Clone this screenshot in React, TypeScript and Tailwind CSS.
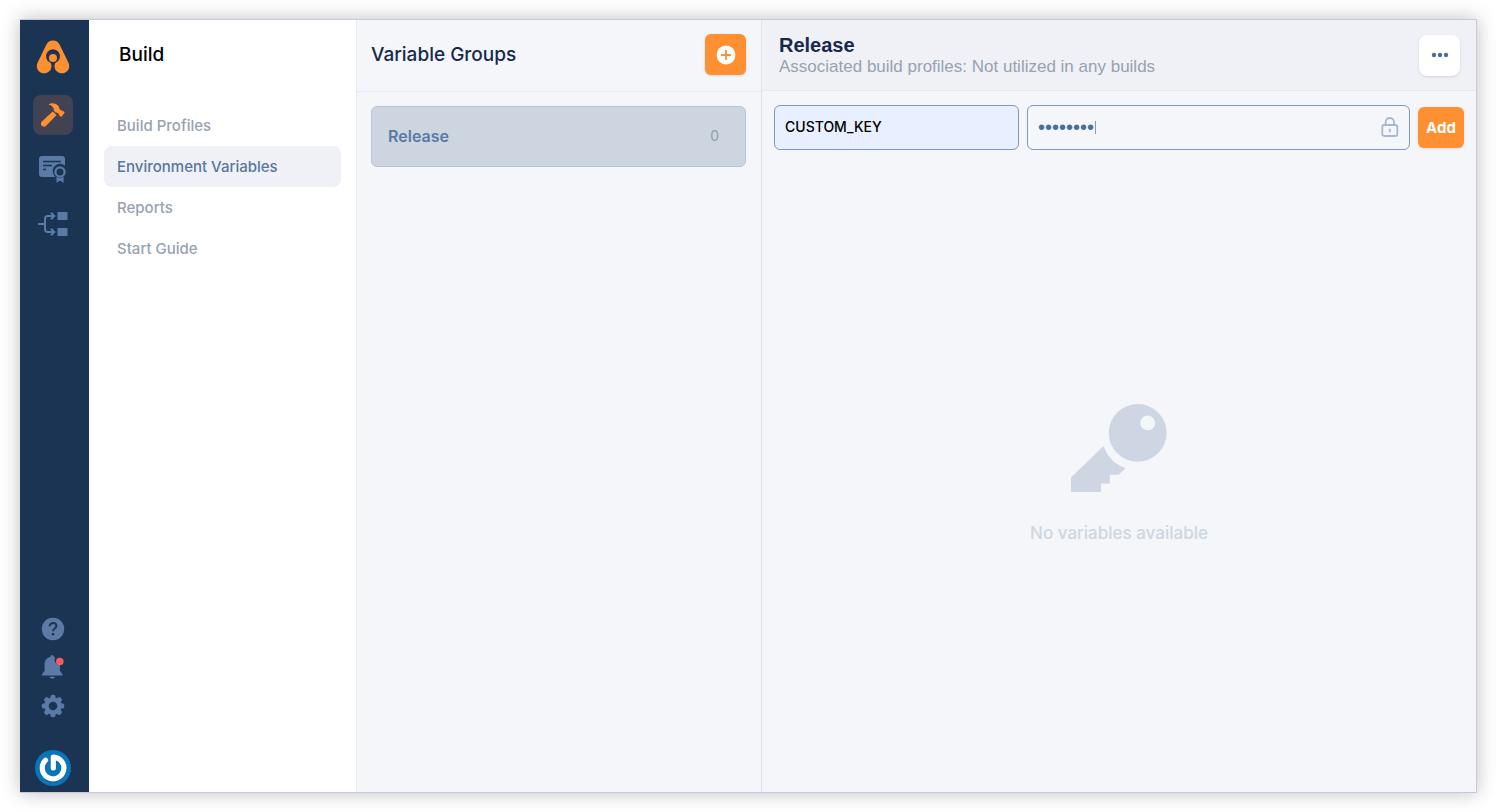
import { useState } from "react";
import { clsx } from "clsx";

function LogoIcon() {
  return (
    <svg viewBox="0 0 34 34" className="h-[34px] w-[34px]" aria-hidden="true">
      <path
        fill="#ff9031"
        d="M17 .5c3 0 5.300 1.400 6.800 4.400l8.400 17.300c.7 1.400 1 2.500 1 3.800 0 4.200-3.200 7.300-7.200 7.300-4.200 0-7.500-3-7.500-7.300 0-1.200.3-2.200 1-3.200a7 7 0 1 0-5 0c.7 1 1 2 1 3.200 0 4.300-3.300 7.300-7.500 7.300-4 0-7.200-3.100-7.200-7.300 0-1.300.3-2.400 1-3.800L10.200 4.900C11.700 1.900 14 .5 17 .5z"
      />
      <circle cx="17" cy="18" r="4" fill="#ff9031" />
    </svg>
  );
}

function HammerIcon() {
  return (
    <svg viewBox="0 0 24 24" className="h-6 w-6" fill="#ff9031" aria-hidden="true">
      <path d="M7.500 1.400C10-.3 14.200-.2 17 2.500c1.600 1.500.9 3.200 2 4.200 1 .8 1.800.4 2.600 1l2.200 1.700-3.500 4.600-1.900-1.400c-.8-.8-.3-1.700-1.200-2.300-.9-.7-1.900-.3-2.900-1.100-1.700-1.200-1.500-2.700-1.900-4.100-.5-1.800-2.500-3-4.900-3.700z" />
      <path d="M11.700 8.400l3.900 3.500L5.100 22.700a2.900 2.900 0 0 1-4.200-4.200z" />
    </svg>
  );
}

function CertificateIcon() {
  return (
    <svg viewBox="0 0 28 28" className="h-7 w-7" aria-hidden="true">
      <path
        fill="#5b7ba6"
        d="M3 1h20a3 3 0 0 1 3 3v6.700a7.300 7.300 0 0 0-11.700 8 7 7 0 0 0 2 3.300H3a3 3 0 0 1-3-3V4a3 3 0 0 1 3-3z"
      />
      <path d="M4 6.500h18M4 10.500h9M4 14.500h3" stroke="#1b3453" strokeWidth="1.600" />
      <circle cx="21" cy="17" r="4.600" fill="none" stroke="#5b7ba6" strokeWidth="2.200" />
      <path fill="#5b7ba6" d="M17.500 21.800a6 6 0 0 0 7.100 0V28L21 25.500 17.500 28z" />
    </svg>
  );
}

function FlowIcon() {
  return (
    <svg viewBox="0 0 30 26" className="h-[26px] w-[30px]" aria-hidden="true">
      <path
        fill="none"
        stroke="#5b7ba6"
        strokeWidth="2"
        d="M0 13h7M16 5h-6a3 3 0 0 0-3 3v10a3 3 0 0 0 3 3h6M13 1.800 16.200 5 13 8.200M13 17.800l3.200 3.200-3.200 3.200"
      />
      <path fill="#5b7ba6" d="M19.500 1h10v8h-10zM19.500 17h10v8h-10z" />
    </svg>
  );
}

function HelpIcon() {
  return (
    <svg viewBox="0 0 24 24" className="h-6 w-6" aria-hidden="true">
      <circle cx="12" cy="12" r="11.200" fill="#5b7ba6" />
      <path
        d="M8.700 9.300c0-1.900 1.400-3.200 3.300-3.200s3.400 1.200 3.400 3c0 2.500-3.400 2.400-3.400 5.200"
        fill="none"
        stroke="#1b3453"
        strokeWidth="2"
      />
      <circle cx="12" cy="17.300" r="1.300" fill="#1b3453" />
    </svg>
  );
}

function BellIcon() {
  return (
    <svg viewBox="0 0 24 26" className="h-[26px] w-6" aria-hidden="true">
      <path
        fill="#5b7ba6"
        d="M11.200 1c1 0 1.600.7 1.700 1.800l1.200.5a5.600 5.600 0 0 0 4.800 8v5.500l2.600 3.400v1.300H1v-1.300l2.600-3.400v-6.500c0-3.800 2.300-6.500 5.900-7.500C9.600 1.700 10.200 1 11.200 1zM8.500 22.800h5.500a2.800 2.300 0 0 1-5.500 0z"
      />
      <circle cx="18.800" cy="7.500" r="3.800" fill="#ff5a5f" />
    </svg>
  );
}

function GearIcon() {
  return (
    <svg viewBox="0 0 24 24" className="h-6 w-6" aria-hidden="true">
      <g fill="#5b7ba6">
        {[0, 45, 90, 135].map((angle) => (
          <rect key={angle} x="9.600" y=".8" width="4.800" height="22.400" rx="1.600" transform={`rotate(${angle} 12 12)`} />
        ))}
        <circle cx="12" cy="12" r="8.700" />
      </g>
      <circle cx="12" cy="12" r="4.300" fill="#1b3453" />
    </svg>
  );
}

function AvatarIcon() {
  return (
    <svg viewBox="0 0 36 36" className="h-9 w-9" aria-hidden="true">
      <circle cx="18" cy="18" r="18" fill="#0a75b8" />
      <path
        d="M10.600 10.200a10.800 10.800 0 1 0 7.700-3V18"
        fill="none"
        stroke="#075a92"
        strokeWidth="5.600"
        strokeLinecap="round"
        opacity=".6"
        transform="translate(0 1)"
      />
      <path
        d="M10.600 10.200a10.800 10.800 0 1 0 7.700-3V18"
        fill="none"
        stroke="#fff"
        strokeWidth="5.200"
        strokeLinecap="round"
        strokeLinejoin="round"
      />
    </svg>
  );
}

function AddCircleIcon() {
  return (
    <svg viewBox="0 0 20 20" className="h-5 w-5" aria-hidden="true">
      <circle cx="10" cy="10" r="9.400" fill="#fff" />
      <path d="M10 5v10M5 10h10" stroke="#ff9031" strokeWidth="1.800" />
    </svg>
  );
}

function LockIcon() {
  return (
    <svg viewBox="0 0 18 20" className="h-5 w-[18px]" fill="none" stroke="#a9b8ce" strokeWidth="1.800" aria-hidden="true">
      <rect x="1.300" y="8" width="15" height="11" rx="1.800" />
      <path d="M4.600 8V5.200a4.200 4.200 0 0 1 8.400 0V8M8.800 11.700v3.500" />
    </svg>
  );
}

function KeyIcon() {
  return (
    <svg viewBox="0 0 96 90" className="h-[90px] w-24" fill="#cdd6e2" aria-hidden="true">
      <path
        fillRule="evenodd"
        d="M66.700 1a28.900 28.900 0 1 1 0 57.800 28.900 28.900 0 0 1 0-57.800zM76.700 12.500a7.400 7.400 0 1 0 0 14.800 7.400 7.400 0 0 0 0-14.800z"
      />
      <path d="M0 74.500 32.600 43c3.200 10.300 11 18.200 22 22.200l-7 6.500h-8.800v8.800H30V89H0z" />
    </svg>
  );
}

const navItems = ["Build Profiles", "Environment Variables", "Reports", "Start Guide"];

const railLink = "flex items-center justify-center";

export default function App() {
  const [key, setKey] = useState("CUSTOM_KEY");
  const [value, setValue] = useState("password");

  return (
    <div className="flex min-h-screen bg-white py-[19px] pr-[19px] pl-5 font-['Liberation_Sans',Arial,sans-serif]">
      <div className="flex flex-1 border border-l-0 border-[#c5cbdc] bg-[#f4f6fa] shadow-[0_0_18px_rgba(0,0,0,0.26)]">
        <aside className="flex w-[69px] shrink-0 flex-col items-center bg-[#1b3453] pt-5 pr-[3px] pb-[6px]">
          <a href="#home" aria-label="Home" className={railLink}>
            <LogoIcon />
          </a>
          <nav aria-label="Modules" className="mt-[21px] flex flex-col items-center">
            <a href="#build" aria-label="Build" className={clsx(railLink, "h-10 w-10 rounded-lg bg-[#414352]")}>
              <HammerIcon />
            </a>
            <a href="#signing" aria-label="Signing identities" className={clsx(railLink, "mt-5")}>
              <CertificateIcon />
            </a>
            <a href="#distribute" aria-label="Distribute" className={clsx(railLink, "mt-7")}>
              <FlowIcon />
            </a>
          </nav>
          <div className="mt-auto flex flex-col items-center">
            <a href="#help" aria-label="Help" className={railLink}>
              <HelpIcon />
            </a>
            <a href="#notifications" aria-label="Notifications" className={clsx(railLink, "mt-[13px]")}>
              <BellIcon />
            </a>
            <a href="#settings" aria-label="Settings" className={clsx(railLink, "mt-[14px]")}>
              <GearIcon />
            </a>
            <a href="#account" aria-label="Account" className={clsx(railLink, "mt-8")}>
              <AvatarIcon />
            </a>
          </div>
        </aside>

        <section className="w-[268px] shrink-0 border-r border-[#e6e9ef] bg-white">
          <h1 className="px-[30px] pt-[23px] font-['Inter',sans-serif] text-[19px] leading-6 font-medium text-black">
            Build
          </h1>
          <nav aria-label="Build" className="mt-[38px] flex flex-col px-[15px]">
            {navItems.map((item) => {
              const active = item === "Environment Variables";
              return (
                <a
                  key={item}
                  href={"#" + item.toLowerCase().replace(" ", "-")}
                  aria-current={active ? "page" : undefined}
                  className={clsx(
                    "flex h-[41px] items-center rounded-lg px-[13px] pt-0.5 font-['Inter',sans-serif] text-[15px] font-medium",
                    active ? "bg-[#eff1f6] text-[#57779f]" : "text-[#98a2af]",
                  )}
                >
                  {item}
                </a>
              );
            })}
          </nav>
        </section>

        <section className="w-[405px] shrink-0 border-r border-[#dce1e9]">
          <header className="flex h-[72px] items-center justify-between border-b border-[#e6e9ef] pr-[15px] pb-0.5 pl-[14px]">
            <h2 className="font-['Inter',sans-serif] text-[19px] leading-6 font-medium text-[#17294d]">
              Variable Groups
            </h2>
            <button
              type="button"
              aria-label="Add variable group"
              className="flex h-[41px] w-[41px] items-center justify-center rounded-md bg-[#ff9031] shadow-sm"
            >
              <AddCircleIcon />
            </button>
          </header>
          <div className="pt-[14px] pr-[15px] pl-[14px]">
            <button
              type="button"
              className="flex h-[61px] w-full items-center justify-between rounded-md border border-[#b8c5d8] bg-[#cdd5e1] pr-[26px] pb-0.5 pl-4 font-['Inter',sans-serif]"
            >
              <span className="text-base font-semibold text-[#5a7aa6]">Release</span>
              <span className="text-sm text-[#939cab]">0</span>
            </button>
          </div>
        </section>

        <main className="flex min-w-0 flex-1 flex-col">
          <header className="flex h-[71px] shrink-0 items-center justify-between border-b border-[#e6e9ef] bg-[#eff1f6] pr-4 pl-[17px]">
            <div className="pt-0.5">
              <h2 className="text-xl leading-[22px] font-bold text-[#17294d]">Release</h2>
              <p className="text-[17px] leading-[22px] text-[#98a2af]">
                Associated build profiles: Not utilized in any builds
              </p>
            </div>
            <button
              type="button"
              aria-label="More options"
              className="flex h-[41px] w-[41px] items-center justify-center rounded-lg bg-white shadow-sm"
            >
              <svg viewBox="0 0 18 6" className="h-1.5 w-[18px]" fill="#4a6da0" aria-hidden="true">
                <circle cx="3" cy="3" r="2.200" />
                <circle cx="9" cy="3" r="2.200" />
                <circle cx="15" cy="3" r="2.200" />
              </svg>
            </button>
          </header>

          <form className="flex items-center gap-2 py-[14px] pr-3 pl-3" onSubmit={(event) => event.preventDefault()}>
            <input
              type="text"
              aria-label="Variable key"
              value={key}
              onChange={(event) => setKey(event.target.value)}
              className="h-[45px] w-[245px] rounded-md border border-[#7d98bd] bg-[#e8effe] px-[10px] pb-0.5 font-['Inter',sans-serif] text-sm font-medium text-black outline-none"
            />
            <div className="relative flex h-[45px] min-w-0 flex-1 items-center rounded-md border border-[#7d98bd] pr-[10px] pb-0.5 pl-[10px]">
              <input
                type="password"
                aria-label="Variable value"
                value={value}
                onChange={(event) => setValue(event.target.value)}
                className="h-6 min-w-0 flex-1 bg-transparent text-xl text-[#4a6da0] outline-none"
              />
              <span className="absolute top-[15px] left-[67px] h-[13px] w-px bg-[#7d98bd]" />
              <LockIcon />
            </div>
            <button
              type="submit"
              className="h-[41px] w-[46px] rounded-md bg-[#ff9031] pt-0.5 font-['Inter',sans-serif] text-[15px] font-bold text-white shadow-sm"
            >
              Add
            </button>
          </form>

          <div className="flex flex-1 flex-col items-center justify-center gap-7 pb-2">
            <KeyIcon />
            <p className="font-['Inter',sans-serif] text-[17px] leading-6 font-medium text-[#cdd6e2]">
              No variables available
            </p>
          </div>
        </main>
      </div>
    </div>
  );
}
